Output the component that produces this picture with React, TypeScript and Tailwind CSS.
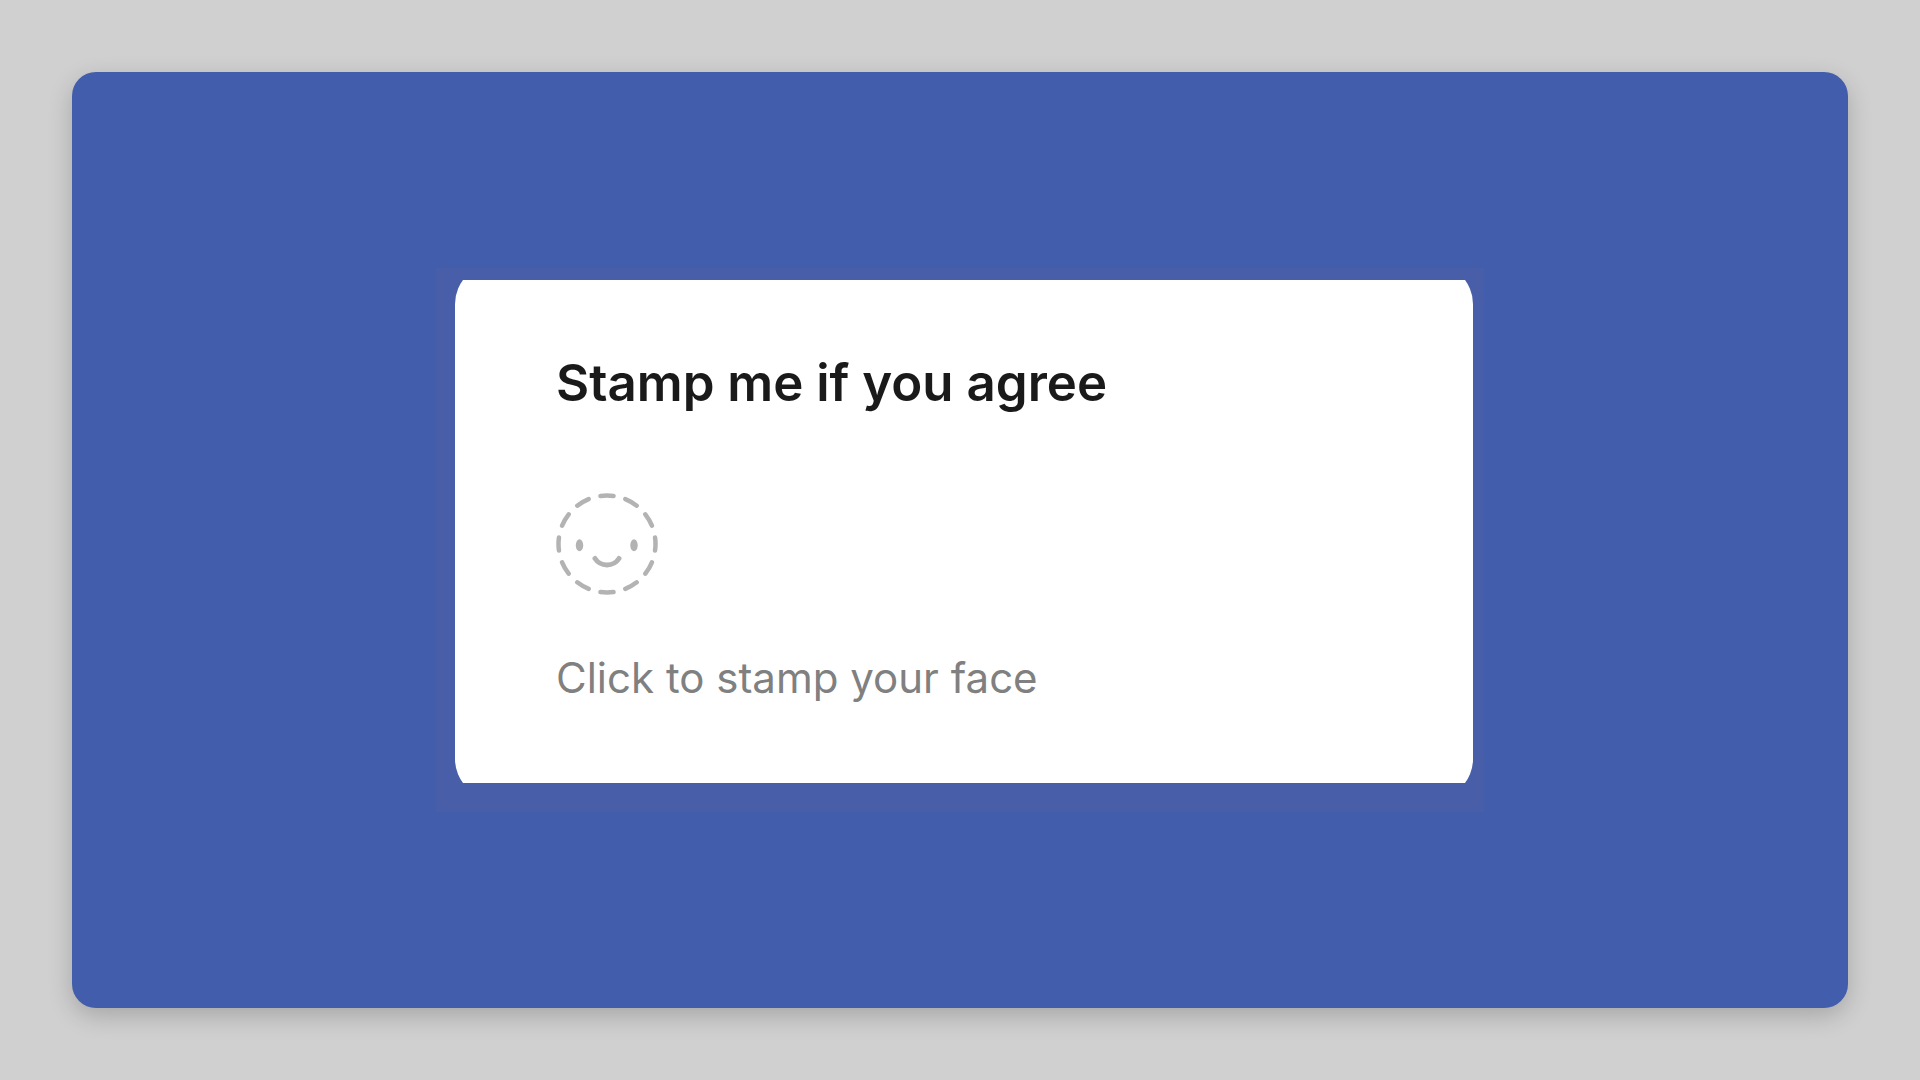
import React, { useState } from 'react'

const StampFace = () => (
  <svg className="w-[102px] h-[102px]" viewBox="1 1 102 102" fill="none" aria-hidden="true">
    <circle
      cx="52"
      cy="52"
      r="48.5"
      stroke="#b3b3b3"
      strokeWidth="4.5"
      strokeLinecap="round"
      pathLength="300"
      strokeDasharray="13 12"
      strokeDashoffset="6.5"
    />
    <ellipse cx="24.5" cy="53.3" rx="3.7" ry="6" fill="#b3b3b3" />
    <ellipse cx="79" cy="53.3" rx="3.7" ry="6" fill="#b3b3b3" />
    <path d="M40 66.5C45.5 75 58.5 75 64 66.5" stroke="#b3b3b3" strokeWidth="5" strokeLinecap="round" />
  </svg>
)

const App = () => {
  const [stamped, setStamped] = useState(false)

  return (
    <div className="min-h-screen flex bg-[#d0d0d0] p-[72px] font-['Inter',sans-serif]">
      <main className="flex-1 flex items-center justify-center rounded-3xl bg-[#425dac] shadow-[0_8px_24px_rgba(0,0,0,0.2)]">
        <div className="w-full max-w-[1048px] bg-[#485ea8] pt-3 pr-[11px] pb-[29px] pl-[19px]">
          {/* The wrapper crops the top and bottom of the rounded card */}
          <div className="overflow-hidden">
            <section className="-my-4 rounded-[40px] bg-white px-[101px] pt-[87px] pb-[89px]">
              <h1 className="text-[51px] leading-[64px] font-semibold text-[#1a1a1a]">Stamp me if you agree</h1>
              <button
                type="button"
                aria-pressed={stamped}
                onClick={() => setStamped(!stamped)}
                className="mt-[78px] flex flex-col items-start gap-[51px] text-left"
              >
                <StampFace />
                <span className="text-[42px] leading-[64px] text-[#808080]">Click to stamp your face</span>
              </button>
            </section>
          </div>
        </div>
      </main>
    </div>
  )
}

export default App
